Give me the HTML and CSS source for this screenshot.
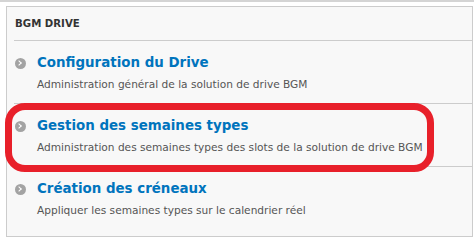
FILE: index.html
```html
<!DOCTYPE html>
<html lang="fr">
<head>
    <meta charset="UTF-8">
    <title>BGM Drive</title>
    <link rel="stylesheet" href="styles.css">
</head>
<body>
<div class="page">
    <div class="panel">
        <h3 class="panel-title">BGM DRIVE</h3>
        <ul class="admin-list">
            <li class="admin-item">
                <a class="admin-link" href="#">
                    <span class="arrow"></span>Configuration du Drive
                </a>
                <p class="description">Administration général de la solution de drive BGM</p>
            </li>
            <li class="admin-item">
                <a class="admin-link" href="#">
                    <span class="arrow"></span>Gestion des semaines types
                </a>
                <p class="description">Administration des semaines types des slots de la solution de drive BGM</p>
                <div class="highlight"></div>
            </li>
            <li class="admin-item">
                <a class="admin-link" href="#">
                    <span class="arrow"></span>Création des créneaux
                </a>
                <p class="description">Appliquer les semaines types sur le calendrier réel</p>
            </li>
        </ul>
    </div>
</div>
</body>
</html>
```

FILE: styles.css
```css
body {
    margin: 0;
    background-color: #ffffff;
    font-family: 'DejaVu Sans', Verdana, sans-serif;
}

.page {
    border-top: 2px solid #d4d4d4;
    padding: 4px 1px 4px 6px;
}

.panel {
    background-color: #f8f8f8;
    border: 1px solid #cccccc;
    height: 231px;
    box-sizing: border-box;
    padding: 0 0 0 7px;
}
.panel .panel-title {
    margin: 0;
    padding: 11px 0 10px 1px;
    font-size: 10.2px;
    font-weight: bold;
    color: #333333;
    border-bottom: 1px solid #cccccc;
    line-height: 12px;
}

.admin-list {
    list-style: none;
    margin: 0;
    padding: 0;
}
.admin-list .admin-item {
    position: relative;
    height: 63px;
    border-bottom: 1px solid #cccccc;
    padding: 15px 0 0 1px;
    box-sizing: border-box;
}
.admin-list .admin-item:last-child {
    border-bottom: none;
}
.admin-item .admin-link {
    display: flex;
    align-items: center;
    font-size: 13.4px;
    font-weight: bold;
    color: #0074bd;
    text-decoration: none;
    line-height: 14px;
}
.admin-item .arrow {
    width: 11px;
    height: 11px;
    border-radius: 50%;
    background-color: #a3a3a3;
    margin-right: 11px;
    position: relative;
    flex-shrink: 0;
}
.admin-item .arrow::after {
    content: '';
    position: absolute;
    left: 2px;
    top: 3px;
    width: 3px;
    height: 3px;
    border-top: 1.5px solid #ffffff;
    border-right: 1.5px solid #ffffff;
    transform: rotate(45deg);
}
.admin-item .description {
    margin: 7px 0 0 22px;
    font-size: 10.6px;
    color: #555555;
    line-height: 14px;
}

/* red annotation drawn over the second row */
.highlight {
    position: absolute;
    left: -9px;
    top: -1px;
    width: 415px;
    height: 55px;
    border: 7px solid #e8202a;
    border-radius: 20px;
}
```
